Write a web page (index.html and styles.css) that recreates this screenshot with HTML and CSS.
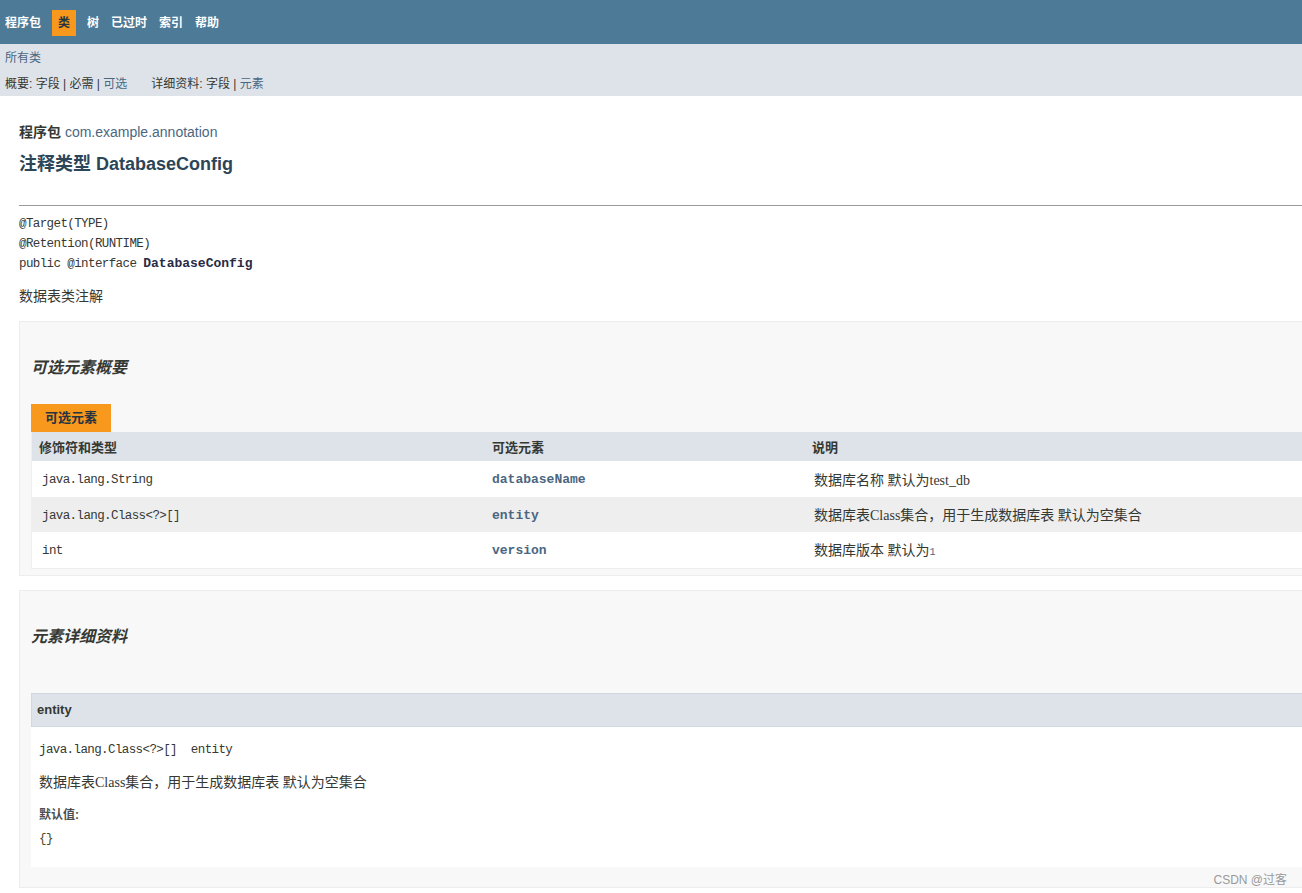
FILE: index.html
```html
<!DOCTYPE html>
<html lang="zh-CN">
<head>
<meta charset="utf-8">
<title>DatabaseConfig</title>
<link rel="stylesheet" href="styles.css">
</head>
<body>
<div class="topnav">
  <ul class="navlist">
    <li><a href="#">程序包</a></li>
    <li class="active">类</li>
    <li><a href="#">树</a></li>
    <li><a href="#">已过时</a></li>
    <li><a href="#">索引</a></li>
    <li><a href="#">帮助</a></li>
  </ul>
</div>
<div class="subnav">
  <div class="allclasses"><a href="#">所有类</a></div>
  <div class="subrow">
    <div class="sublist">概要:&nbsp;字段&nbsp;|&nbsp;必需&nbsp;|&nbsp;<a href="#">可选</a></div>
    <div class="sublist">详细资料:&nbsp;字段&nbsp;|&nbsp;<a href="#">元素</a></div>
  </div>
</div>
<div class="header">
  <div class="subtitle"><span class="pkglabel">程序包</span>&nbsp;com.example.annotation</div>
  <h2 class="title">注释类型 DatabaseConfig</h2>
</div>
<div class="contentcontainer">
  <div class="description">
    <hr class="rule">
    <pre class="sig">@Target(TYPE)
@Retention(RUNTIME)
public @interface <span class="strong">DatabaseConfig</span></pre>
    <div class="block">数据表类注解</div>
  </div>
  <div class="summary">
    <div class="box">
      <h3 class="boxhead">可选元素概要</h3>
      <div class="caption"><span>可选元素</span></div>
      <table class="memberSummary">
        <thead>
          <tr><th class="c1">修饰符和类型</th><th class="c2">可选元素</th><th class="c3">说明</th></tr>
        </thead>
        <tbody>
          <tr class="alt"><td class="c1"><code>java.lang.String</code></td><td class="c2"><code class="member">databaseName</code></td><td class="c3"><div class="block">数据库名称 默认为test_db</div></td></tr>
          <tr class="row"><td class="c1"><code>java.lang.Class&lt;?&gt;[]</code></td><td class="c2"><code class="member">entity</code></td><td class="c3"><div class="block">数据库表Class集合，用于生成数据库表 默认为空集合</div></td></tr>
          <tr class="alt"><td class="c1"><code>int</code></td><td class="c2"><code class="member">version</code></td><td class="c3"><div class="block">数据库版本 默认为<code class="small">1</code></div></td></tr>
        </tbody>
      </table>
    </div>
  </div>
  <div class="details">
    <div class="box box2">
      <h3 class="boxhead">元素详细资料</h3>
      <div class="member-detail">
        <h4 class="detailhead">entity</h4>
        <div class="detailbody">
          <pre class="sig2">java.lang.Class&lt;?&gt;[]&nbsp;&nbsp;entity</pre>
          <div class="block">数据库表Class集合，用于生成数据库表 默认为空集合</div>
          <div class="dt">默认值:</div>
          <div class="dd"><code>{}</code></div>
        </div>
      </div>
    </div>
  </div>
</div>
<div class="watermark">CSDN @过客</div>
</body>
</html>
```
FILE: styles.css
```css
html {
  overflow-x: hidden;
}
html, body {
  margin: 0;
  padding: 0;
}
body {
  background: #ffffff;
  color: #353833;
  font-family: "Liberation Sans", "Noto Sans CJK SC", sans-serif;
  font-size: 14px;
  width: 1302px;
  min-height: 893px;
  position: relative;
}
a {
  color: #4a6782;
  text-decoration: none;
}
.topnav {
  background: #4d7a97;
  height: 44px;
  box-sizing: border-box;
  padding-top: 10px;
}
.navlist {
  list-style: none;
  margin: 0 0 0 -1px;
  padding: 0;
  display: flex;
}
.navlist li {
  padding: 0 6px;
  height: 26px;
  line-height: 26px;
  font-size: 12px;
  font-weight: bold;
  color: #ffffff;
}
.navlist li a {
  color: #ffffff;
}
.navlist li.active {
  margin: 0 5px;
  background: #f8981d;
  color: #253441;
}
.subnav {
  background: #dee3e9;
  height: 52px;
  font-size: 12px;
  padding-left: 5px;
}
.allclasses {
  padding-top: 7px;
  height: 20px;
  line-height: 15px;
}
.subrow {
  display: flex;
  gap: 24px;
  padding-top: 6px;
  line-height: 15px;
}
.sublist {
  color: #353833;
}
.header {
  padding: 27px 19px 0;
}
.subtitle {
  font-size: 14px;
  line-height: 18px;
  color: #4a6782;
}
.pkglabel {
  font-weight: bold;
  color: #353833;
}
.title {
  margin: 11px 0 0;
  font-size: 18px;
  line-height: 24px;
  color: #2c4557;
}
.contentcontainer {
  padding-left: 19px;
}
.rule {
  margin: 29px 0 0;
  border: 0;
  border-top: 1px solid #9a9a9a;
  height: 0;
}
.sig {
  margin: 9px 0 0;
  font-family: "Liberation Mono", monospace;
  font-size: 12.5px;
  letter-spacing: -0.6px;
  line-height: 19.5px;
  color: #353833;
}
.strong {
  font-weight: bold;
  font-size: 13px;
  letter-spacing: 0;
  color: #2a2a45;
}
.block {
  font-family: "Liberation Serif", "Noto Sans CJK SC", serif;
  font-size: 14px;
  line-height: 20px;
}
.description .block {
  margin-top: 12px;
}
.box {
  margin-top: 14px;
  background: #f8f8f8;
  border: 1px solid #ededed;
  border-right: 0;
  padding: 0 0 6px 11px;
}
.boxhead {
  margin: 0;
  padding-top: 35px;
  height: 22px;
  line-height: 22px;
  font-size: 16px;
  font-style: italic;
  font-weight: bold;
  color: #353833;
}
.caption {
  margin-top: 25px;
  display: flex;
}
.caption span {
  background: #f8981d;
  color: #253441;
  font-weight: bold;
  font-size: 13px;
  height: 28px;
  line-height: 28px;
  padding: 0 14px;
}
.memberSummary {
  border-collapse: collapse;
  border-spacing: 0;
  width: 1300px;
  border: 1px solid #eeeeee;
  border-right: 0;
  border-top: 0;
}
.memberSummary th {
  background: #dee3e9;
  text-align: left;
  font-size: 13px;
  font-weight: bold;
  height: 29px;
  padding: 0 7px;
  color: #353833;
}
.memberSummary th.c1 { width: 439px; }
.memberSummary th.c2 { width: 306px; }
.memberSummary td {
  padding: 0 7px 0 10px;
  vertical-align: middle;
}
.memberSummary td.c2 { padding-left: 7px; }
.memberSummary tr.alt td { background: #ffffff; height: 36px; }
.memberSummary tr.row td { background: #eeeeee; height: 35px; }
.memberSummary td.c3 { padding-left: 9px; }
.memberSummary td .block { padding-top: 4px; }
code {
  font-family: "Liberation Mono", monospace;
  font-size: 12.5px;
  letter-spacing: -0.6px;
}
.memberSummary td.c1 code { color: #353833; }
.member {
  font-weight: bold;
  font-size: 13px;
  letter-spacing: 0;
  color: #4a6782;
}
code.small {
  font-size: 10px;
  letter-spacing: 0;
  color: #4a6782;
}
.box2 {
  margin-top: 14px;
  padding-bottom: 20px;
}
.member-detail {
  margin-top: 45px;
}
.detailhead {
  margin: 0;
  background: #dee3e9;
  border: 1px solid #d0d9e0;
  border-right: 0;
  height: 32px;
  line-height: 32px;
  padding-left: 5px;
  font-size: 13px;
  font-weight: bold;
  color: #353833;
}
.detailbody {
  background: #ffffff;
  padding: 14px 0 20px 8px;
}
.sig2 {
  margin: 0;
  font-family: "Liberation Mono", monospace;
  font-size: 12.5px;
  letter-spacing: -0.6px;
  line-height: 18px;
  color: #353833;
}
.detailbody .block {
  margin-top: 14px;
}
.dt {
  margin-top: 14px;
  font-size: 12px;
  font-weight: bold;
  line-height: 16px;
  color: #4e4e4e;
}
.dd {
  margin-top: 6px;
  line-height: 16px;
}
.dd code { color: #4a4a22; }
.watermark {
  position: absolute;
  right: 15px;
  top: 870px;
  font-size: 12px;
  color: #9a9a9a;
  font-family: "Liberation Sans", "Noto Sans CJK SC", sans-serif;
}
```
